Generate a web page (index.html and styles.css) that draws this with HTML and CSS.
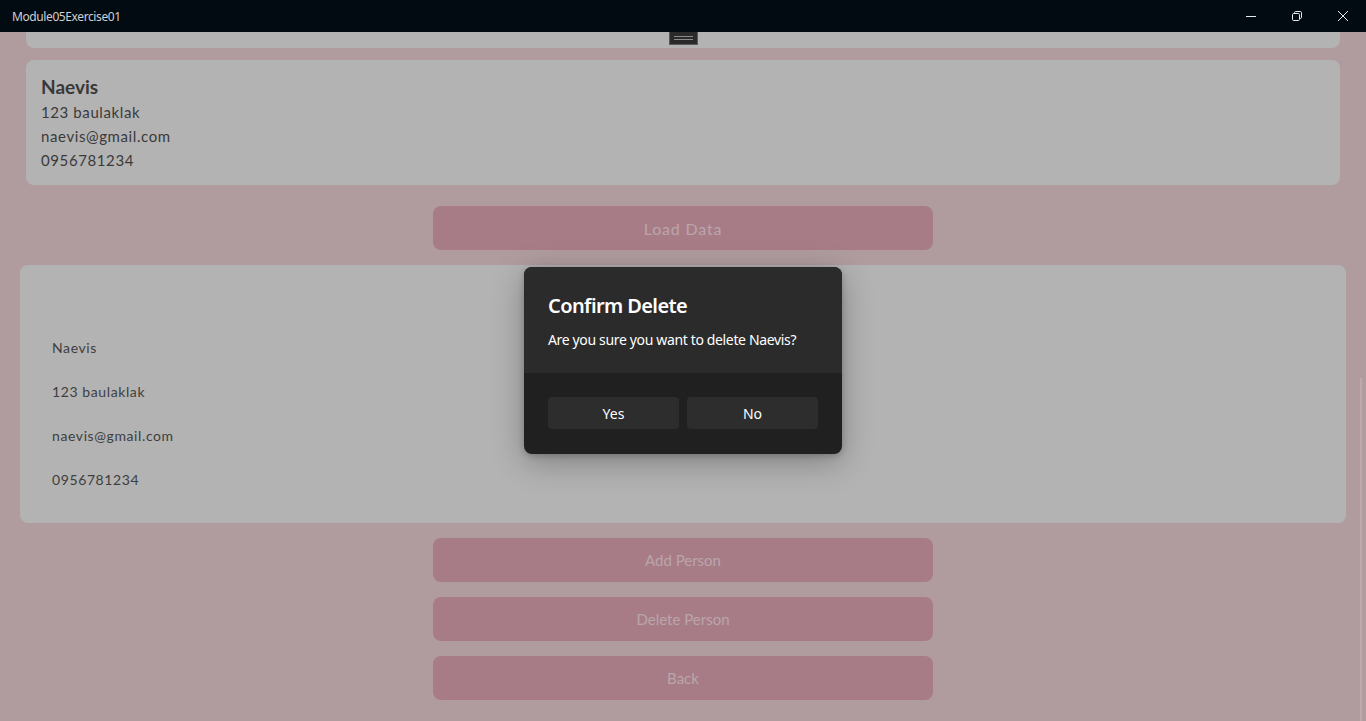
FILE: index.html
```html
<!DOCTYPE html>
<html>
<head>
<meta charset="utf-8">
<link rel="stylesheet" href="styles.css">
</head>
<body>
<div class="titlebar">
  <span class="title">Module05Exercise01</span>
  <div class="caption">
    <span class="cap-btn"><svg width="10" height="10" viewBox="0 0 10 10"><path d="M0 5.5H10" stroke="#e8e8e8" stroke-width="1"/></svg></span>
    <span class="cap-btn"><svg width="10" height="10" viewBox="0 0 10 10" fill="none" stroke="#e8e8e8" stroke-width="1"><rect x="0.5" y="2.5" width="7" height="7" rx="1.2"/><path d="M2.5 2.5V1.7Q2.5 0.5 3.7 0.5H8.3Q9.5 0.5 9.5 1.7V6.3Q9.5 7.5 8.3 7.5H7.5"/></svg></span>
    <span class="cap-btn"><svg width="10" height="10" viewBox="0 0 10 10"><path d="M0 0L10 10M10 0L0 10" stroke="#e8e8e8" stroke-width="1"/></svg></span>
  </div>
</div>
<main class="content">
  <div class="card-tail"></div>
  <div class="handle"><span></span><span></span></div>
  <section class="card">
    <div class="name">Naevis</div>
    <div class="line">123 baulaklak</div>
    <div class="line">naevis@gmail.com</div>
    <div class="line">0956781234</div>
  </section>
  <button class="btn load">Load Data</button>
  <section class="form">
    <div class="field">Naevis</div>
    <div class="field">123 baulaklak</div>
    <div class="field">naevis@gmail.com</div>
    <div class="field">0956781234</div>
  </section>
  <button class="btn">Add Person</button>
  <button class="btn">Delete Person</button>
  <button class="btn">Back</button>
  <div class="scroll"></div>
</main>
<div class="dialog">
  <div class="dlg-top">
    <div class="dlg-title">Confirm Delete</div>
    <div class="dlg-msg">Are you sure you want to delete Naevis?</div>
  </div>
  <div class="dlg-bottom">
    <button class="dlg-btn">Yes</button>
    <button class="dlg-btn">No</button>
  </div>
</div>
</body>
</html>
```
FILE: styles.css
```css
* { box-sizing: border-box; }
html, body { margin: 0; padding: 0; }
body {
  width: 1366px;
  height: 721px;
  overflow: hidden;
  background: #b09c9e;
  font-family: "Lato", "Noto Sans", sans-serif;
  position: relative;
}
.titlebar {
  height: 32px;
  background: #020a12;
  display: flex;
  align-items: center;
  justify-content: space-between;
}
.title {
  font-family: "Noto Sans", sans-serif;
  font-size: 12px;
  letter-spacing: -0.4px;
  color: #d0d0d0;
  padding-left: 12px;
}
.caption { display: flex; height: 32px; }
.cap-btn {
  width: 46px;
  height: 32px;
  display: flex;
  align-items: center;
  justify-content: center;
}
.content {
  position: relative;
  display: flex;
  flex-direction: column;
  align-items: center;
  height: 689px;
}
.card-tail {
  width: 1314px;
  height: 16px;
  background: #b3b3b3;
  border-radius: 0 0 8px 8px;
}
.handle {
  position: absolute;
  left: 669px;
  top: 0;
  width: 29px;
  height: 13px;
  background: #2a2a2a;
  border: 1px solid #5a5a5a;
  border-top: none;
  display: flex;
  flex-direction: column;
  align-items: center;
  justify-content: center;
  gap: 2px;
}
.handle span {
  display: block;
  width: 19px;
  height: 1px;
  background: #8a8a8a;
}
.card {
  width: 1314px;
  margin-top: 12px;
  background: #b3b3b3;
  border-radius: 8px;
  padding: 14px 15px 13px;
  color: #3a3a3a;
}
.name {
  font-size: 19px;
  font-weight: 700;
  line-height: 26px;
  color: #383838;
}
.line {
  font-size: 15px;
  line-height: 24px;
  letter-spacing: 0.6px;
}
.btn {
  width: 500px;
  height: 44px;
  border: none;
  border-radius: 8px;
  background: #a87c87;
  color: #b9a6ab;
  font-family: inherit;
  font-size: 15px;
  margin-top: 15px;
  padding: 0;
}
.btn.load { margin-top: 21px; font-size: 16px; letter-spacing: 0.8px; }
.form {
  width: 1326px;
  height: 258px;
  margin-top: 15px;
  background: #b3b3b3;
  border-radius: 8px;
  padding: 61px 32px 0;
  color: #3e3e3e;
}
.field {
  font-size: 14px;
  line-height: 44px;
  letter-spacing: 0.6px;
}
.scroll {
  position: absolute;
  right: 4px;
  top: 346px;
  width: 2px;
  height: 343px;
  background: #bcaaad;
}
.dialog {
  position: absolute;
  left: 524px;
  top: 267px;
  width: 318px;
  height: 187px;
  border-radius: 8px;
  overflow: hidden;
  background: #202020;
  box-shadow: 0 8px 32px rgba(0,0,0,0.28), 0 2px 6px rgba(0,0,0,0.2);
  font-family: "Noto Sans", "Open Sans", sans-serif;
  display: flex;
  flex-direction: column;
}
.dlg-top {
  background: #2b2b2b;
  height: 106px;
  padding: 24px 24px 0;
  color: #ffffff;
}
.dlg-title {
  font-size: 20px;
  font-weight: 600;
  line-height: 30px;
  letter-spacing: -0.6px;
}
.dlg-msg {
  font-size: 14px;
  line-height: 20px;
  margin-top: 9px;
  letter-spacing: -0.35px;
}
.dlg-bottom {
  flex: 1;
  display: flex;
  gap: 8px;
  padding: 24px 24px 0;
}
.dlg-btn {
  width: 131px;
  height: 32px;
  border: none;
  border-radius: 4px;
  background: #2d2d2d;
  color: #ffffff;
  font-family: inherit;
  font-size: 14px;
  padding: 0;
}
```
